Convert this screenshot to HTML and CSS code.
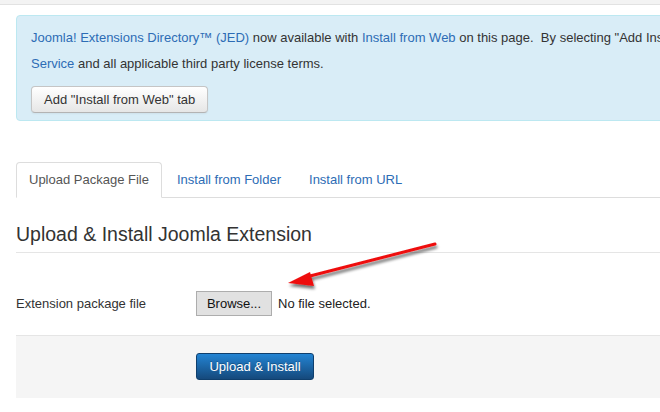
FILE: index.html
```html
<!DOCTYPE html>
<html>
<head>
<meta charset="utf-8">
<link rel="stylesheet" href="styles.css">
</head>
<body>
<div class="topbar"></div>
<div class="page">
  <div class="alert">
    <p class="alert-text"><a href="#">Joomla! Extensions Directory™ (JED)</a> now available with <a href="#">Install from Web</a> on this page.&nbsp; By selecting "Add Install from Web" tab below, you agree to the JED <a href="#">Terms of<br>Service</a> and all applicable third party license terms.</p>
    <button class="btn">Add "Install from Web" tab</button>
  </div>

  <ul class="tabs">
    <li class="tab active"><a href="#">Upload Package File</a></li>
    <li class="tab"><a href="#">Install from Folder</a></li>
    <li class="tab"><a href="#">Install from URL</a></li>
  </ul>

  <h2 class="legend">Upload &amp; Install Joomla Extension</h2>

  <div class="control-group">
    <label class="control-label">Extension package file</label>
    <div class="controls">
      <button class="browse">Browse...</button>
      <span class="nofile">No file selected.</span>
    </div>
  </div>

  <div class="form-actions">
    <button class="btn-primary">Upload &amp; Install</button>
  </div>
</div>

<svg class="arrow" width="180" height="60" viewBox="0 0 180 60">
  <defs>
    <filter id="sh" x="-20%" y="-50%" width="140%" height="200%">
      <feGaussianBlur in="SourceAlpha" stdDeviation="1.6"/>
      <feOffset dx="1" dy="3" result="b"/>
      <feComponentTransfer><feFuncA type="linear" slope="0.55"/></feComponentTransfer>
      <feMerge><feMergeNode/><feMergeNode in="SourceGraphic"/></feMerge>
    </filter>
  </defs>
  <g filter="url(#sh)">
    <line x1="155" y1="9" x2="30" y2="41" stroke="#ee1111" stroke-width="3" stroke-linecap="round"/>
    <polygon points="8,48 30,37 34,51" fill="#ee1111"/>
  </g>
</svg>
</body>
</html>
```

FILE: styles.css
```css
html, body {
  margin: 0;
  padding: 0;
  background: #fff;
  overflow: hidden;
}
body {
  font-family: "Liberation Sans", Arial, sans-serif;
  font-size: 13px;
  color: #333;
  width: 660px;
  height: 412px;
  position: relative;
}
a {
  color: #2d6cb5;
  text-decoration: none;
}
.topbar {
  height: 4px;
  background: #f3f3f3;
  border-bottom: 1px solid #e2e2e2;
}
.page {
  margin: 10px 0 0 16px;
  width: 760px;
}
.alert {
  background: #d9edf7;
  border: 1px solid #bce8f1;
  border-radius: 4px;
  padding: 9px 14px 7px;
}
.alert-text {
  margin: 0 0 9px;
  line-height: 26px;
  white-space: nowrap;
  color: #333;
}
.btn {
  font-family: inherit;
  font-size: 13px;
  line-height: 18px;
  color: #333;
  padding: 4px 12px;
  height: 27px;
  width: 177px;
  white-space: nowrap;
  border: 1px solid #c5c5c5;
  border-bottom-color: #b3b3b3;
  border-radius: 4px;
  background: linear-gradient(#ffffff, #e6e6e6);
  box-shadow: inset 0 1px 0 rgba(255,255,255,.2), 0 1px 2px rgba(0,0,0,.05);
  display: block;
}
.tabs {
  list-style: none;
  margin: 41px 0 18px;
  padding: 0;
  display: flex;
  gap: 2px;
  border-bottom: 1px solid #ddd;
  height: 35px;
}
.tab a {
  display: block;
  padding: 8px 12px;
  line-height: 18px;
  border: 1px solid transparent;
  border-radius: 4px 4px 0 0;
  color: #2d6cb5;
}
.tab.active a {
  color: #555;
  background: #fff;
  border-color: #ddd #ddd transparent;
}
.legend {
  margin: 0 0 38px;
  font-size: 19.5px;
  font-weight: normal;
  line-height: 36px;
  color: #333;
  border-bottom: 1px solid #e5e5e5;
}
.control-group {
  display: flex;
  align-items: center;
  height: 25px;
}
.control-label {
  width: 180px;
}
.controls {
  display: flex;
  align-items: center;
  gap: 6px;
}
.browse {
  font-family: inherit;
  font-size: 13px;
  color: #111;
  width: 76px;
  height: 25px;
  padding: 0;
  background: #e1e1e1;
  border: 1px solid #adadad;
  border-radius: 0;
}
.nofile {
  color: #222;
}
.form-actions {
  margin-top: 19px;
  background: #f5f5f5;
  border-top: 1px solid #e5e5e5;
  padding: 17px 0 18px 180px;
}
.btn-primary {
  display: block;
  font-family: inherit;
  font-size: 13px;
  color: #fff;
  width: 118px;
  height: 27px;
  padding: 0;
  border: 1px solid #0f3f6d;
  border-radius: 3px;
  background: linear-gradient(#2384d3, #15497c);
  text-shadow: 0 -1px 0 rgba(0,0,0,.25);
}
.arrow {
  position: absolute;
  left: 280px;
  top: 235px;
}
```
